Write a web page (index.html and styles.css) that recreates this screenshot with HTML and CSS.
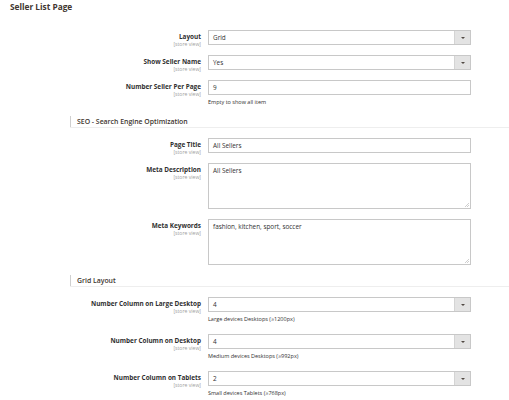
FILE: index.html
```html
<!DOCTYPE html>
<html lang="en">
<head>
<meta charset="utf-8">
<title>Seller List Page</title>
<link rel="stylesheet" href="styles.css">
</head>
<body>
<div class="page">
  <h1 class="title">Seller List Page</h1>

  <div class="rows first">
    <div class="row">
      <div class="label"><span class="name">Layout</span><span class="scope">[store view]</span></div>
      <div class="control">
        <div class="select"><span class="value">Grid</span><span class="arrow"><i></i></span></div>
      </div>
    </div>
    <div class="row">
      <div class="label"><span class="name">Show Seller Name</span><span class="scope">[store view]</span></div>
      <div class="control">
        <div class="select"><span class="value">Yes</span><span class="arrow"><i></i></span></div>
      </div>
    </div>
    <div class="row">
      <div class="label"><span class="name">Number Seller Per Page</span><span class="scope">[store view]</span></div>
      <div class="control">
        <div class="input">9</div>
        <div class="note">Empty to show all item</div>
      </div>
    </div>
  </div>

  <div class="section-head"><span>SEO - Search Engine Optimization</span></div>

  <div class="rows">
    <div class="row">
      <div class="label"><span class="name">Page Title</span><span class="scope">[store view]</span></div>
      <div class="control"><div class="input">All Sellers</div></div>
    </div>
    <div class="row">
      <div class="label"><span class="name">Meta Description</span><span class="scope">[store view]</span></div>
      <div class="control"><div class="textarea">All Sellers</div></div>
    </div>
    <div class="row">
      <div class="label"><span class="name">Meta Keywords</span><span class="scope">[store view]</span></div>
      <div class="control"><div class="textarea">fashion, kitchen, sport, soccer</div></div>
    </div>
  </div>

  <div class="section-head grid-head"><span>Grid Layout</span></div>

  <div class="rows grid">
    <div class="row">
      <div class="label"><span class="name">Number Column on Large Desktop</span><span class="scope">[store view]</span></div>
      <div class="control">
        <div class="select"><span class="value">4</span><span class="arrow"><i></i></span></div>
        <div class="note">Large devices Desktops (≥1200px)</div>
      </div>
    </div>
    <div class="row">
      <div class="label"><span class="name">Number Column on Desktop</span><span class="scope">[store view]</span></div>
      <div class="control">
        <div class="select"><span class="value">4</span><span class="arrow"><i></i></span></div>
        <div class="note">Medium devices Desktops (≥992px)</div>
      </div>
    </div>
    <div class="row">
      <div class="label"><span class="name">Number Column on Tablets</span><span class="scope">[store view]</span></div>
      <div class="control">
        <div class="select"><span class="value">2</span><span class="arrow"><i></i></span></div>
        <div class="note">Small devices Tablets (≥768px)</div>
      </div>
    </div>
  </div>
</div>
</body>
</html>
```
FILE: styles.css
```css
* { box-sizing: border-box; }
html, body { margin: 0; padding: 0; background: #fff; }
body {
  font-family: "Open Sans", "Liberation Sans", sans-serif;
  color: #303030;
  width: 509px;
  height: 400px;
  overflow: hidden;
}
.page { padding: 3px 0 0 0; }
.title {
  margin: 0 0 0 10px;
  font-size: 8.3px;
  line-height: 8px;
  font-weight: 700;
  color: #41362f;
}
.rows {
  display: flex;
  flex-direction: column;
  gap: 10px;
}
.rows.first { margin-top: 19px; }
.row {
  display: grid;
  grid-template-columns: 201px 263px;
  column-gap: 7px;
  align-items: start;
}
.label {
  display: flex;
  flex-direction: column;
  align-items: flex-end;
  text-align: right;
  padding-top: 3px;
  height: 15px;
}
.name {
  font-size: 6.4px;
  line-height: 8px;
  font-weight: 700;
  color: #303030;
}
.scope {
  font-size: 5.1px;
  line-height: 6px;
  color: #a0a0a0;
}
.control { display: flex; flex-direction: column; }
.select, .input {
  height: 15px;
  border: 1px solid #c8c8c8;
  background: #fff;
  font-size: 6.4px;
  line-height: 13px;
  padding-left: 4px;
  color: #303030;
}
.select { display: flex; padding-left: 0; }
.select .value { flex: 1; padding-left: 4px; }
.select .arrow {
  width: 16px;
  background: #e3e3e3;
  border-left: 1px solid #d4d4d4;
  display: flex;
  align-items: center;
  justify-content: center;
}
.select .arrow i {
  width: 0;
  height: 0;
  border-left: 2px solid transparent;
  border-right: 2px solid transparent;
  border-top: 2px solid #514943;
}
.textarea {
  height: 46px;
  border: 1px solid #c8c8c8;
  font-size: 6.4px;
  line-height: 8px;
  padding: 3px 4px;
  color: #303030;
  background:
    linear-gradient(135deg, transparent 50%, #cfcfcf 50%, #cfcfcf 58%, transparent 58%, transparent 75%, #cfcfcf 75%, #cfcfcf 83%, transparent 83%) no-repeat right 1px bottom 1px / 4px 4px,
    #fff;
}
.note {
  padding-top: 3px;
  font-size: 5.5px;
  line-height: 8px;
  color: #303030;
}
.rows.grid { gap: 11px; }
.section-head {
  margin: 10px 0 10px 70px;
  border-bottom: 1px solid #eeeeee;
  height: 12px;
}
.section-head.grid-head { margin-top: 10px; }
.section-head span {
  display: block;
  border-left: 1px solid #cfcfcf;
  height: 11px;
  padding-left: 6px;
  font-size: 6.9px;
  line-height: 11px;
  font-weight: 600;
  color: #41362f;
}
```
